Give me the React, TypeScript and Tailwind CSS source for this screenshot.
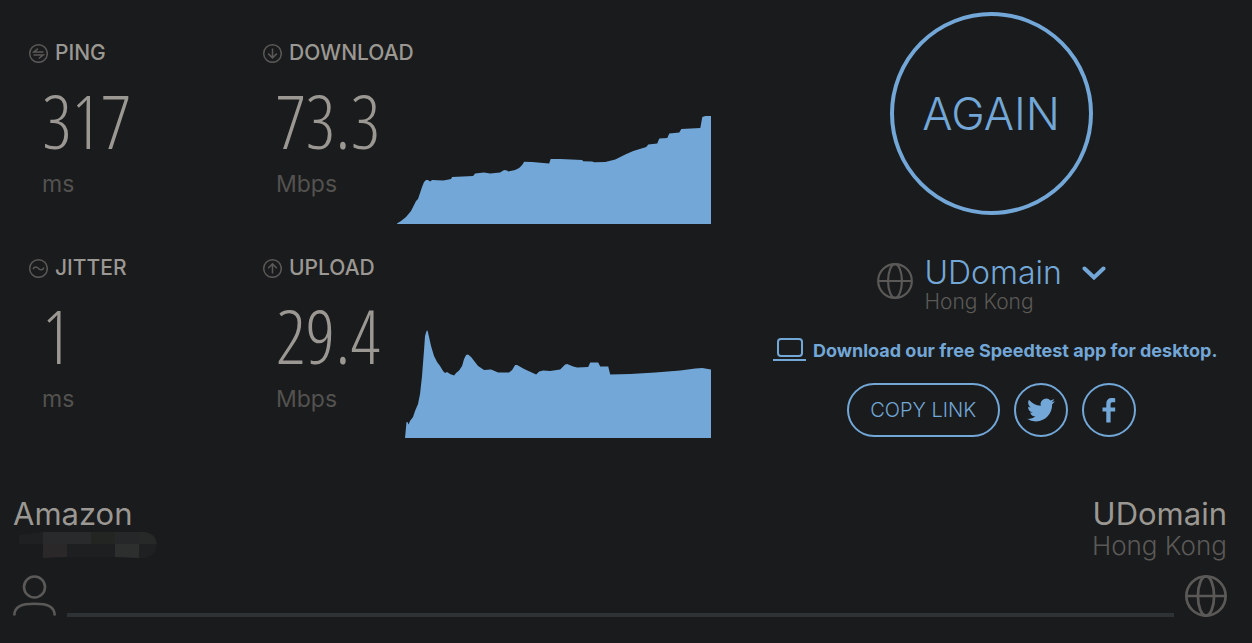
import type { ReactNode } from "react";

type Point = [number, number];

const downloadPoints: Point[] = [
  [397, 223.5], [401, 221], [406, 217], [411, 211], [414, 205], [416, 201], [418, 199], [420, 193], [422, 187],
  [424, 182], [426, 180], [428, 180], [430, 181.5], [432, 180], [443, 180.5], [446, 180], [451, 179], [452, 177],
  [473, 176], [475, 173.5], [484, 172.5], [490, 173.5], [500, 172.5], [504, 170], [507, 170.5], [508, 171.5],
  [515, 170], [519, 168], [522, 165], [524, 161.7], [532, 162], [549, 163.5], [550.5, 159], [560, 159],
  [582, 160], [583, 161.3], [592, 161.5], [594, 162.3], [605, 162], [615, 159.5], [625, 154.5], [633, 151],
  [646, 147], [648, 144.5], [657, 143.5], [659, 138.5], [667, 138], [669, 133.5], [679, 132.5], [681, 129],
  [700, 128], [702, 117], [705, 116], [711, 116],
];

const uploadPoints: Point[] = [
  [405, 438], [406.5, 422], [407.5, 422], [408.5, 424.5], [410, 421], [413, 417], [415, 411], [418, 404],
  [420, 394], [422, 376], [424, 350], [425, 336], [426.5, 331], [427.5, 330.5], [429, 337], [431, 346],
  [434, 356], [437, 362], [440, 366], [443, 371], [445, 373], [447, 372], [450, 374], [454, 375.5], [456, 373],
  [459, 370.5], [462, 366], [464, 359], [466, 355], [468, 354.5], [471, 357], [478, 366], [484, 370],
  [491, 369.5], [498, 372.5], [509, 372.5], [512, 370], [515, 365], [517, 365], [524, 369], [536, 374.5],
  [539, 371.5], [543, 370.5], [550, 371], [560, 369.5], [565, 364.5], [567, 364], [573, 366.5], [577, 367.5],
  [588, 367], [590, 362.5], [598, 362.5], [600, 366.5], [608, 366.5], [610, 374.5], [630, 374], [655, 372.5],
  [680, 370.5], [695, 368.5], [702, 368], [711, 369.5],
];

interface AreaChartProps {
  points: Point[];
  top: number;
  base: number;
  label: string;
}

function AreaChart({ points, top, base, label }: AreaChartProps) {
  const line = points.map(([x, y]) => `${x},${y}`).join(" ");
  return (
    <svg
      role="img"
      aria-label={label}
      viewBox={`397 ${top} 314 109`}
      preserveAspectRatio="none"
      className="h-[109px] min-w-0 flex-1 fill-[#72a7d8]"
    >
      <polygon points={`${points[0][0]},${base} ${line} 711,${base}`} />
    </svg>
  );
}

function RoundIcon({ children }: { children: ReactNode }) {
  return (
    <svg viewBox="0 0 20 20" aria-hidden="true" className="size-5 fill-none stroke-[#5b5957] stroke-[1.5]">
      <circle cx="10.500" cy="10.500" r="8.800" />
      {children}
    </svg>
  );
}

function Globe({ className }: { className: string }) {
  return (
    <svg viewBox="0 0 40 40" aria-hidden="true" className={className}>
      <circle cx="20" cy="20" r="18.700" />
      <ellipse cx="20" cy="20" rx="7.700" ry="18.700" />
      <path d="M1.300 20h37.400" />
    </svg>
  );
}

function Metric(props: { icon: ReactNode; name: string; value: string; unit: string; chart?: ReactNode }) {
  return (
    <section>
      <h2 className="flex h-5 items-center gap-[7px] text-[21px] leading-5 font-medium">
        <RoundIcon>{props.icon}</RoundIcon>
        {props.name}
      </h2>
      <div className="flex h-[161px] items-end">
        <div className="w-[135px] shrink-0 pb-[26px] pl-[14px]">
          <p className="font-['Open_Sans_Condensed_Light','Roboto_Condensed','Roboto',sans-serif] text-[74px] leading-[98px] font-light">
            {props.value}
          </p>
          <p className="text-[23px] leading-7 text-[#535250]">{props.unit}</p>
        </div>
        {props.chart}
      </div>
    </section>
  );
}

export default function App() {
  return (
    <main className="min-h-screen bg-[#1a1b1c] font-['Inter',sans-serif] text-[#9b9893]">
      <div className="grid grid-cols-[7fr_5fr]">
        <div className="grid grid-cols-[234px_1fr] content-start gap-y-[34px] pt-[43px] pr-[19px] pl-7">
          <Metric
            name="PING"
            value="317"
            unit="ms"
            icon={<path d="M15.500 8.900H5.900l4-3.200M5.500 11.900h9.800l-4.600 3.600" />}
          />
          <Metric
            name="DOWNLOAD"
            value="73.3"
            unit="Mbps"
            icon={<path d="M10.500 5.500v9.200M6.200 10.600l4.300 4.300 4.300-4.300" />}
            chart={<AreaChart points={downloadPoints} top={115} base={224} label="Download speed" />}
          />
          <Metric
            name="JITTER"
            value="1"
            unit="ms"
            icon={<path d="M5.100 11.300C6.100 8.500 8.500 8.300 10.500 10.400s4.400 2 5.400-.9" />}
          />
          <Metric
            name="UPLOAD"
            value="29.4"
            unit="Mbps"
            icon={<path d="M10.500 15.500V6.100M6.200 10.200l4.300-4.300 4.300 4.300" />}
            chart={<AreaChart points={uploadPoints} top={330} base={438} label="Upload speed" />}
          />
        </div>

        <div className="flex flex-col items-center pt-3 text-[#72a7d8]">
          <button className="size-[203px] rounded-full border-4 border-[#72a7d8] text-[45px] font-light">AGAIN</button>
          <div className="mt-[42px] flex items-start gap-3">
            <Globe className="mt-[6px] size-9 fill-none stroke-[#5b5957] stroke-[2.4]" />
            <div>
              <button className="flex items-center gap-5 text-[32px] leading-8 font-light">
                UDomain
                <svg viewBox="0 0 24 16" aria-hidden="true" className="h-4 w-6 fill-none stroke-current stroke-4">
                  <path d="M2.500 3.500 12 12.500l9.500-9" strokeLinecap="round" />
                </svg>
              </button>
              <p className="text-[21px] leading-[26px] font-light text-[#5b5957]">Hong Kong</p>
            </div>
          </div>
          <a
            href="#desktop"
            className="mt-[23px] ml-2 flex h-6 items-center gap-[7px] text-[18px] font-bold whitespace-nowrap"
          >
            <svg viewBox="0 0 33 24" aria-hidden="true" className="h-6 w-[33px] fill-none stroke-current stroke-2">
              <rect x="5" y="1" width="24" height="17" rx="3" />
              <path d="M0 22h33" />
            </svg>
            Download our free Speedtest app for desktop.
          </a>
          <div className="mt-[21px] flex gap-[14px]">
            <button className="h-[54px] w-[153px] rounded-full border-2 border-[#72a7d8] text-[20px] font-light">
              COPY LINK
            </button>
            <a
              href="#twitter"
              aria-label="Share on Twitter"
              className="flex size-[54px] items-center justify-center rounded-full border-2 border-[#72a7d8]"
            >
              <svg viewBox="0 0 24 24" aria-hidden="true" className="size-7 fill-current">
                <path d="M23.953 4.570a10 10 0 01-2.825.775 4.958 4.958 0 002.163-2.723c-.951.555-2.005.959-3.127 1.184a4.920 4.920 0 00-8.384 4.482C7.690 8.095 4.067 6.130 1.640 3.162a4.822 4.822 0 00-.666 2.475c0 1.710.870 3.213 2.188 4.096a4.904 4.904 0 01-2.228-.616v.060a4.923 4.923 0 003.946 4.827 4.996 4.996 0 01-2.212.085 4.936 4.936 0 004.604 3.417 9.867 9.867 0 01-6.102 2.105c-.390 0-.779-.023-1.170-.067a13.995 13.995 0 007.557 2.209c9.053 0 13.998-7.496 13.998-13.985 0-.210 0-.420-.015-.630A9.935 9.935 0 0024 4.590z" />
              </svg>
            </a>
            <a
              href="#facebook"
              aria-label="Share on Facebook"
              className="flex size-[54px] items-center justify-center rounded-full border-2 border-[#72a7d8]"
            >
              <svg viewBox="0 0 14 26" aria-hidden="true" className="h-[26px] w-[14px] fill-current">
                <path d="M4.300 25.500V14.600H.5v-4.200h3.800V6.900C4.300 2.900 6.600 1 10 1c1.300 0 2.600.1 3.200.2v4h-2.500c-1.700 0-2.100.9-2.100 2.200v3h4.600v4.200H8.600V25.500z" />
              </svg>
            </a>
          </div>
        </div>
      </div>

      <footer className="px-[13px] pt-[59px] pb-6">
        <div className="flex justify-between pr-3">
          <div>
            <p className="text-[31px] leading-8">Amazon</p>
            <svg viewBox="0 0 144 26" aria-hidden="true" className="mt-[2px] h-[26px] w-[144px]">
              <path d="M6 3 30 0v12H6z" fill="#1f2021" />
              <path d="M30 0h48v12H30z" fill="#292a2b" />
              <path d="M78 0h24v12H78z" fill="#232523" />
              <path d="M102 0h24v12h-24z" fill="#252728" />
              <path d="M126 0h6q10 1 12 12h-18z" fill="#272928" />
              <path d="M30 12h24v13l-24 1z" fill="#2a2828" />
              <path d="M54 12h48v13H54z" fill="#1e1f20" />
              <path d="M102 12h24v14l-24-1z" fill="#2d2f2e" />
              <path d="M126 12h18q-1 12-12 14h-6z" fill="#1e2021" />
            </svg>
          </div>
          <div className="text-right">
            <p className="text-[31px] leading-8">UDomain</p>
            <p className="text-[26px] leading-8 font-light text-[#5b5957]">Hong Kong</p>
          </div>
        </div>
        <div className="mt-[13px] flex items-end gap-[11px] pr-3">
          <svg
            viewBox="0 0 43 42"
            aria-hidden="true"
            className="h-[42px] w-[43px] fill-none stroke-[#5b5957] stroke-[2.6]"
          >
            <circle cx="21.500" cy="12" r="10.500" />
            <path d="M1.300 40.500C1.300 31 9 28.800 21.500 28.800S41.700 31 41.700 40.500" />
          </svg>
          <div className="h-1 flex-1 bg-[#2e3235]" />
          <Globe className="size-[42px] fill-none stroke-[#5b5957] stroke-[2.6]" />
        </div>
      </footer>
    </main>
  );
}
